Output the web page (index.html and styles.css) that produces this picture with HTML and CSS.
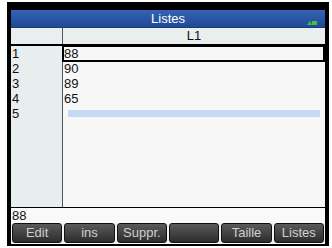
FILE: index.html
```html
<!DOCTYPE html>
<html lang="fr">
<head>
  <meta charset="UTF-8">
  <title>Listes</title>
  <link rel="stylesheet" href="styles.css">
</head>
<body>

<div class="frame">
  <div class="screen">
    <!-- Titre -->
    <div class="title">
      <span>Listes</span>
      <svg class="batt" width="10" height="5" viewBox="0 0 10 5">
        <path d="M0 5 L3 1 L5 5 Z" fill="#3cc23c"/>
        <rect x="5" y="1" width="5" height="4" fill="#3cc23c"/>
      </svg>
    </div>

    <!-- En-tête de colonne -->
    <div class="head">
      <div class="head-idx"></div>
      <div class="head-col">L1</div>
    </div>

    <!-- Tableau -->
    <div class="table">
      <div class="idx">
        <div class="row">1</div>
        <div class="row">2</div>
        <div class="row">3</div>
        <div class="row">4</div>
        <div class="row">5</div>
      </div>
      <div class="data">
        <div class="row sel">88</div>
        <div class="row">90</div>
        <div class="row">89</div>
        <div class="row">65</div>
        <div class="row"><div class="cursor"></div></div>
      </div>
    </div>

    <!-- Ligne d'édition -->
    <div class="edit">88</div>

    <!-- Touches -->
    <div class="keys">
      <div class="key">Edit</div>
      <div class="key">ins</div>
      <div class="key">Suppr.</div>
      <div class="key"></div>
      <div class="key">Taille</div>
      <div class="key">Listes</div>
    </div>
  </div>
</div>

</body>
</html>
```

FILE: styles.css
```css
/* Général */
body {
  margin: 0;
  background-color: #ffffff;
  font-family: 'Liberation Sans', Arial, sans-serif;
}

.frame {
  width: 314px;
  height: 234px;
  margin: 2px 0 0 7px;
  padding: 8px 4px 2px 4px;
  background-color: #000000;
}

.screen {
  height: 234px;
  display: flex;
  flex-direction: column;
  background-color: #f7f7f7;
}

/* Titre */
.title {
  height: 18px;
  display: flex;
  align-items: center;
  justify-content: center;
  position: relative;
  background: linear-gradient(#3563b1, #1f4a98);
  border-bottom: 1px solid #173a7a;
  box-sizing: border-box;
  color: #ffffff;
  font-size: 13px;
}

.title .batt {
  position: absolute;
  right: 8px;
  top: 10px;
}

/* En-tête */
.head {
  height: 16px;
  display: flex;
  background-color: #e9eeee;
  font-size: 13px;
}

.head-idx {
  width: 51px;
  border-right: 1px solid #555555;
}

.head-col {
  flex: 1;
  text-align: center;
  line-height: 16px;
  color: #111111;
}

/* Tableau */
.table {
  height: 161px;
  display: flex;
  border-top: 2px solid #000000;
  border-bottom: 1px solid #000000;
  font-size: 13px;
  color: #111111;
}

.idx {
  width: 50px;
  padding-left: 1px;
  background-color: #e8eeee;
  border-right: 1px solid #555555;
}

.data {
  flex: 1;
}

.row {
  height: 15px;
  line-height: 15px;
}

.data .row {
  padding-left: 1px;
}

.data .sel {
  outline: 2px solid #000000;
  outline-offset: -1px;
  margin-right: 1px;
}

.cursor {
  height: 7px;
  margin: 4px 5px 0 4px;
  background-color: #c5d9f5;
}

/* Ligne d'édition */
.edit {
  height: 15px;
  line-height: 15px;
  padding-left: 1px;
  font-size: 13px;
  color: #111111;
  background-color: #f9f9f9;
}

/* Touches */
.keys {
  height: 20px;
  display: flex;
  gap: 2px;
  padding: 0 1px;
  background-color: #f2f2f2;
}

.key {
  flex: 1;
  border: 1px solid #111111;
  border-radius: 3px;
  background: linear-gradient(#5a5a5a, #2c2c2c);
  color: #cfcfcf;
  font-size: 13px;
  text-align: center;
  line-height: 18px;
}
```
